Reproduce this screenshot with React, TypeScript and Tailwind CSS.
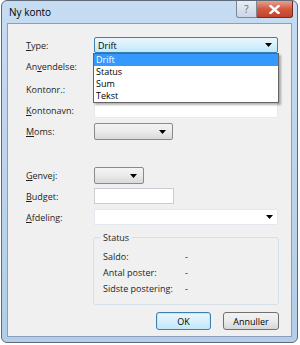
import React from "react";

const font = { fontFamily: '"Segoe UI", "Open Sans", "Liberation Sans", sans-serif' };

function Arrow({ className = "" }: { className?: string }) {
  return (
    <svg width="7" height="4" viewBox="0 0 7 4" className={className}>
      <path d="M0 0 H7 L3.5 4 Z" fill="#000" />
    </svg>
  );
}

function Label({ pre = "", u, post }: { pre?: string; u: string; post: string }) {
  return (
    <div className="w-[68px] shrink-0 text-[9px] text-[#1e1e1e] leading-none">
      {pre}
      <span className="underline underline-offset-1">{u}</span>
      {post}
    </div>
  );
}

function GrayCombo({ w }: { w: string }) {
  return (
    <div
      className={`${w} h-[17px] rounded-[2px] border border-[#8a8a8a] bg-gradient-to-b from-[#f4f4f4] via-[#ebebeb] to-[#d9d9d9] flex items-center justify-end pr-[6px]`}
    >
      <Arrow />
    </div>
  );
}

export default function App() {
  return (
    <div className="w-[300px] h-[345px] bg-white relative overflow-hidden" style={font}>
      {/* window frame */}
      <div className="absolute left-[1px] top-0 w-[297px] h-[343px] rounded-[6px] border border-[#5f6b78] bg-gradient-to-b from-[#c5dcf2] via-[#bcd4ec] to-[#b4cde8] flex flex-col">
        {/* title bar */}
        <div className="h-[22px] flex items-start relative">
          <div className="pl-[7px] pt-[6px] text-[10px] leading-none text-[#000]">Ny konto</div>
          <div className="ml-auto mr-[4px] flex">
            <div className="w-[21px] h-[17px] rounded-bl-[3px] border border-t-0 border-[#7a8795] bg-gradient-to-b from-[#e9eef4] to-[#cbd6e2] flex items-center justify-center text-[10px] text-[#6a6a6a] leading-none">
              ?
            </div>
            <div className="w-[36px] h-[17px] rounded-br-[3px] border border-t-0 border-l-0 border-[#7a2a1c] bg-gradient-to-b from-[#e6a08f] via-[#d05a40] to-[#c4422a] flex items-center justify-center">
              <svg width="11" height="9" viewBox="0 0 11 9">
                <path d="M1.5 1 L9.5 8 M9.5 1 L1.5 8" stroke="#fff" strokeWidth="2.4" strokeLinecap="square" />
              </svg>
            </div>
          </div>
        </div>
        {/* client area */}
        <div className="mx-[5px] h-[314px] border border-[#8aa0b8] bg-[#f0f0f0] relative">
          <div className="pl-[18px] pt-[13px] flex flex-col">
            {/* Type */}
            <div className="h-[16px] flex items-center">
              <Label u="T" post="ype:" />
              <div className="w-[184px] h-[16px] rounded-[2px] border border-[#3c7fb1] bg-gradient-to-b from-[#eaf6fd] via-[#d9f0fc] to-[#bee6fd] flex items-center pl-[3px] pr-[5px] text-[9px] leading-none text-[#000]">
                Drift
                <Arrow className="ml-auto" />
              </div>
            </div>
            {/* Anvendelse */}
            <div className="h-[16px] mt-[5px] flex items-center">
              <Label pre="An" u="v" post="endelse:" />
              <div className="w-[184px] h-[16px] bg-white border border-[#abadb3]" />
            </div>
            {/* Kontonr */}
            <div className="h-[16px] mt-[7px] flex items-center">
              <div className="w-[68px] shrink-0 text-[9px] leading-none text-[#1e1e1e]">Kontonr.:</div>
              <div className="w-[184px] h-[16px] bg-white border border-[#e3e9ef]" />
            </div>
            {/* Kontonavn */}
            <div className="h-[16px] mt-[5px] flex items-center">
              <Label u="K" post="ontonavn:" />
              <div className="w-[184px] h-[16px] bg-white border border-[#e6eaee] border-t-[#dfe3e8]" />
            </div>
            {/* Moms */}
            <div className="h-[17px] mt-[5px] flex items-center">
              <Label u="M" post="oms:" />
              <GrayCombo w="w-[79px]" />
            </div>
            {/* Genvej */}
            <div className="h-[17px] mt-[27px] flex items-center">
              <Label u="G" post="envej:" />
              <GrayCombo w="w-[50px]" />
            </div>
            {/* Budget */}
            <div className="h-[16px] mt-[4px] flex items-center">
              <Label u="B" post="udget:" />
              <div className="w-[80px] h-[16px] bg-white border border-[#c9ced4]" />
            </div>
            {/* Afdeling */}
            <div className="h-[16px] mt-[5px] flex items-center">
              <Label u="A" post="fdeling:" />
              <div className="w-[184px] h-[16px] bg-white border border-[#e3e9ef] flex items-center justify-end pr-[4px]">
                <Arrow />
              </div>
            </div>
            {/* Status group */}
            <div className="flex mt-[8px]">
              <div className="w-[67px] shrink-0" />
              <fieldset className="w-[186px] h-[72px] border border-[#d5dfe5] rounded-[3px] px-[9px] pb-0 pt-[1px] m-0">
                <legend className="px-[3px] ml-[-3px] text-[9px] leading-none text-[#1e1e1e]">Status</legend>
                <div className="flex flex-col gap-[6px] mt-[8px] text-[9px] leading-none text-[#1e1e1e]">
                  <div className="flex h-[10px] items-center">
                    <span className="w-[82px]">Saldo:</span>
                    <span>-</span>
                  </div>
                  <div className="flex h-[10px] items-center">
                    <span className="w-[82px]">Antal poster:</span>
                    <span>-</span>
                  </div>
                  <div className="flex h-[10px] items-center">
                    <span className="w-[82px]">Sidste postering:</span>
                    <span>-</span>
                  </div>
                </div>
              </fieldset>
            </div>
            {/* buttons */}
            <div className="flex mt-[7px] pl-[130px] gap-[12px]">
              <div className="w-[55px] h-[18px] rounded-[3px] border border-[#3c7fb1] bg-gradient-to-b from-[#eaf6fd] via-[#d9f0fc] to-[#bee6fd] shadow-[inset_0_0_0_1px_#c6e6f8] flex items-center justify-center text-[9px] leading-none text-[#000]">
                OK
              </div>
              <div className="w-[56px] h-[18px] rounded-[3px] border border-[#707070] bg-gradient-to-b from-[#f2f2f2] via-[#ebebeb] to-[#d6d6d6] flex items-center justify-center text-[9px] leading-none text-[#000]">
                Annuller
              </div>
            </div>
          </div>
          {/* open dropdown list */}
          <div className="absolute left-[85px] top-[29px] w-[186px] h-[50px] bg-white border border-[#646464] shadow-[2px_2px_2px_rgba(0,0,0,0.3)] flex flex-col text-[9px]">
            <div className="h-[12px] leading-[12px] bg-[#3399ff] text-white pl-[2px]">Drift</div>
            <div className="h-[12px] leading-[12px] pl-[2px] text-[#000]">Status</div>
            <div className="h-[12px] leading-[12px] pl-[2px] text-[#000]">Sum</div>
            <div className="h-[12px] leading-[12px] pl-[2px] text-[#000]">Tekst</div>
          </div>
        </div>
      </div>
    </div>
  );
}
